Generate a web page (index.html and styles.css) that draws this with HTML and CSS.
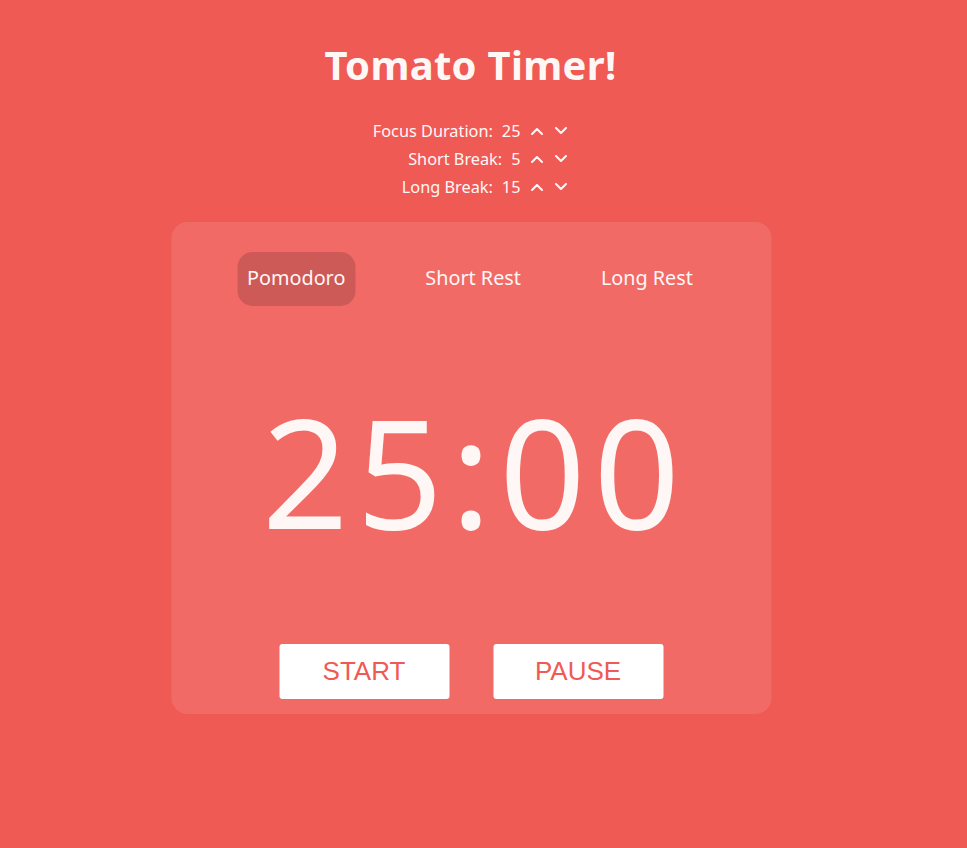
FILE: index.html
```html
<!DOCTYPE html>
<html>
<head>
<meta charset="utf-8">
<link rel="stylesheet" href="styles.css">
<title>Tomato Timer</title>
</head>
<body>
<main class="app">
  <h1 class="title">Tomato Timer!</h1>
  <div class="settings">
    <div class="setting">
      <span class="label">Focus Duration:</span>
      <span class="value">25</span>
      <button class="arrow" aria-label="up"><svg viewBox="0 0 12 8" width="12" height="8"><path d="M1 7 L6 2 L11 7" /></svg></button>
      <button class="arrow" aria-label="down"><svg viewBox="0 0 12 8" width="12" height="8"><path d="M1 1 L6 6 L11 1" /></svg></button>
    </div>
    <div class="setting">
      <span class="label">Short Break:</span>
      <span class="value">5</span>
      <button class="arrow" aria-label="up"><svg viewBox="0 0 12 8" width="12" height="8"><path d="M1 7 L6 2 L11 7" /></svg></button>
      <button class="arrow" aria-label="down"><svg viewBox="0 0 12 8" width="12" height="8"><path d="M1 1 L6 6 L11 1" /></svg></button>
    </div>
    <div class="setting">
      <span class="label">Long Break:</span>
      <span class="value">15</span>
      <button class="arrow" aria-label="up"><svg viewBox="0 0 12 8" width="12" height="8"><path d="M1 7 L6 2 L11 7" /></svg></button>
      <button class="arrow" aria-label="down"><svg viewBox="0 0 12 8" width="12" height="8"><path d="M1 1 L6 6 L11 1" /></svg></button>
    </div>
  </div>
  <section class="card">
    <nav class="tabs">
      <button class="tab active">Pomodoro</button>
      <button class="tab">Short Rest</button>
      <button class="tab">Long Rest</button>
    </nav>
    <div class="time">25:00</div>
    <div class="controls">
      <button class="ctrl">START</button>
      <button class="ctrl">PAUSE</button>
    </div>
  </section>
</main>
</body>
</html>
```
FILE: styles.css
```css
* { box-sizing: border-box; }
html, body { margin: 0; padding: 0; }
body {
  background: #f05a55;
  color: #fff7f5;
  font-family: "Noto Sans", "Open Sans", sans-serif;
  min-height: 848px;
}
.app {
  display: flex;
  flex-direction: column;
  align-items: center;
  padding-top: 36px;
}
.title {
  margin: 0;
  font-size: 40px;
  font-weight: 700;
  line-height: 58px;
  letter-spacing: 0.3px;
  transform: translateX(-13px);
}
.settings {
  align-self: flex-start;
  margin-left: calc(50% - 114px);
  width: 199px;
  display: flex;
  flex-direction: column;
  align-items: flex-end;
  margin-top: 23px;
}
.setting {
  display: flex;
  align-items: center;
  height: 28px;
  font-size: 16.3px;
}
.label { margin-right: 9px; }
.value { margin-right: 4px; }
.arrow {
  background: none;
  border: 0;
  padding: 0 6px;
  display: flex;
  align-items: center;
  cursor: pointer;
}
.arrow:last-child { padding-right: 2px; }
.arrow svg path {
  fill: none;
  stroke: #fff7f5;
  stroke-width: 2;
  stroke-linecap: round;
  stroke-linejoin: round;
}
.card {
  margin-top: 21px;
  width: 600px;
  height: 492px;
  background: rgba(255, 255, 255, 0.1);
  border-radius: 16px;
  display: flex;
  flex-direction: column;
  align-items: center;
  padding-top: 30px;
  transform: translateX(-12.5px);
}
.tabs {
  display: flex;
  gap: 60px;
  transform: translateX(-1px);
}
.tab {
  background: none;
  border: 0;
  color: #fff7f5;
  font-family: "Noto Sans", "Open Sans", sans-serif;
  font-size: 19.8px;
  height: 54px;
  padding: 0 10px 4px;
  border-radius: 15px;
}
.tab.active { background: rgba(0, 0, 0, 0.15); }
.time {
  margin-top: 65px;
  font-size: 151px;
  line-height: 200px;
  font-weight: 400;
  letter-spacing: 8px;
  text-indent: 8px;
}
.controls {
  margin-top: 73px;
  display: flex;
  gap: 44px;
}
.ctrl {
  width: 170px;
  height: 55px;
  background: #fff;
  border: 0;
  border-radius: 3px;
  color: #f05a55;
  font-family: "Liberation Sans", Arial, sans-serif;
  font-size: 26px;
}
```
